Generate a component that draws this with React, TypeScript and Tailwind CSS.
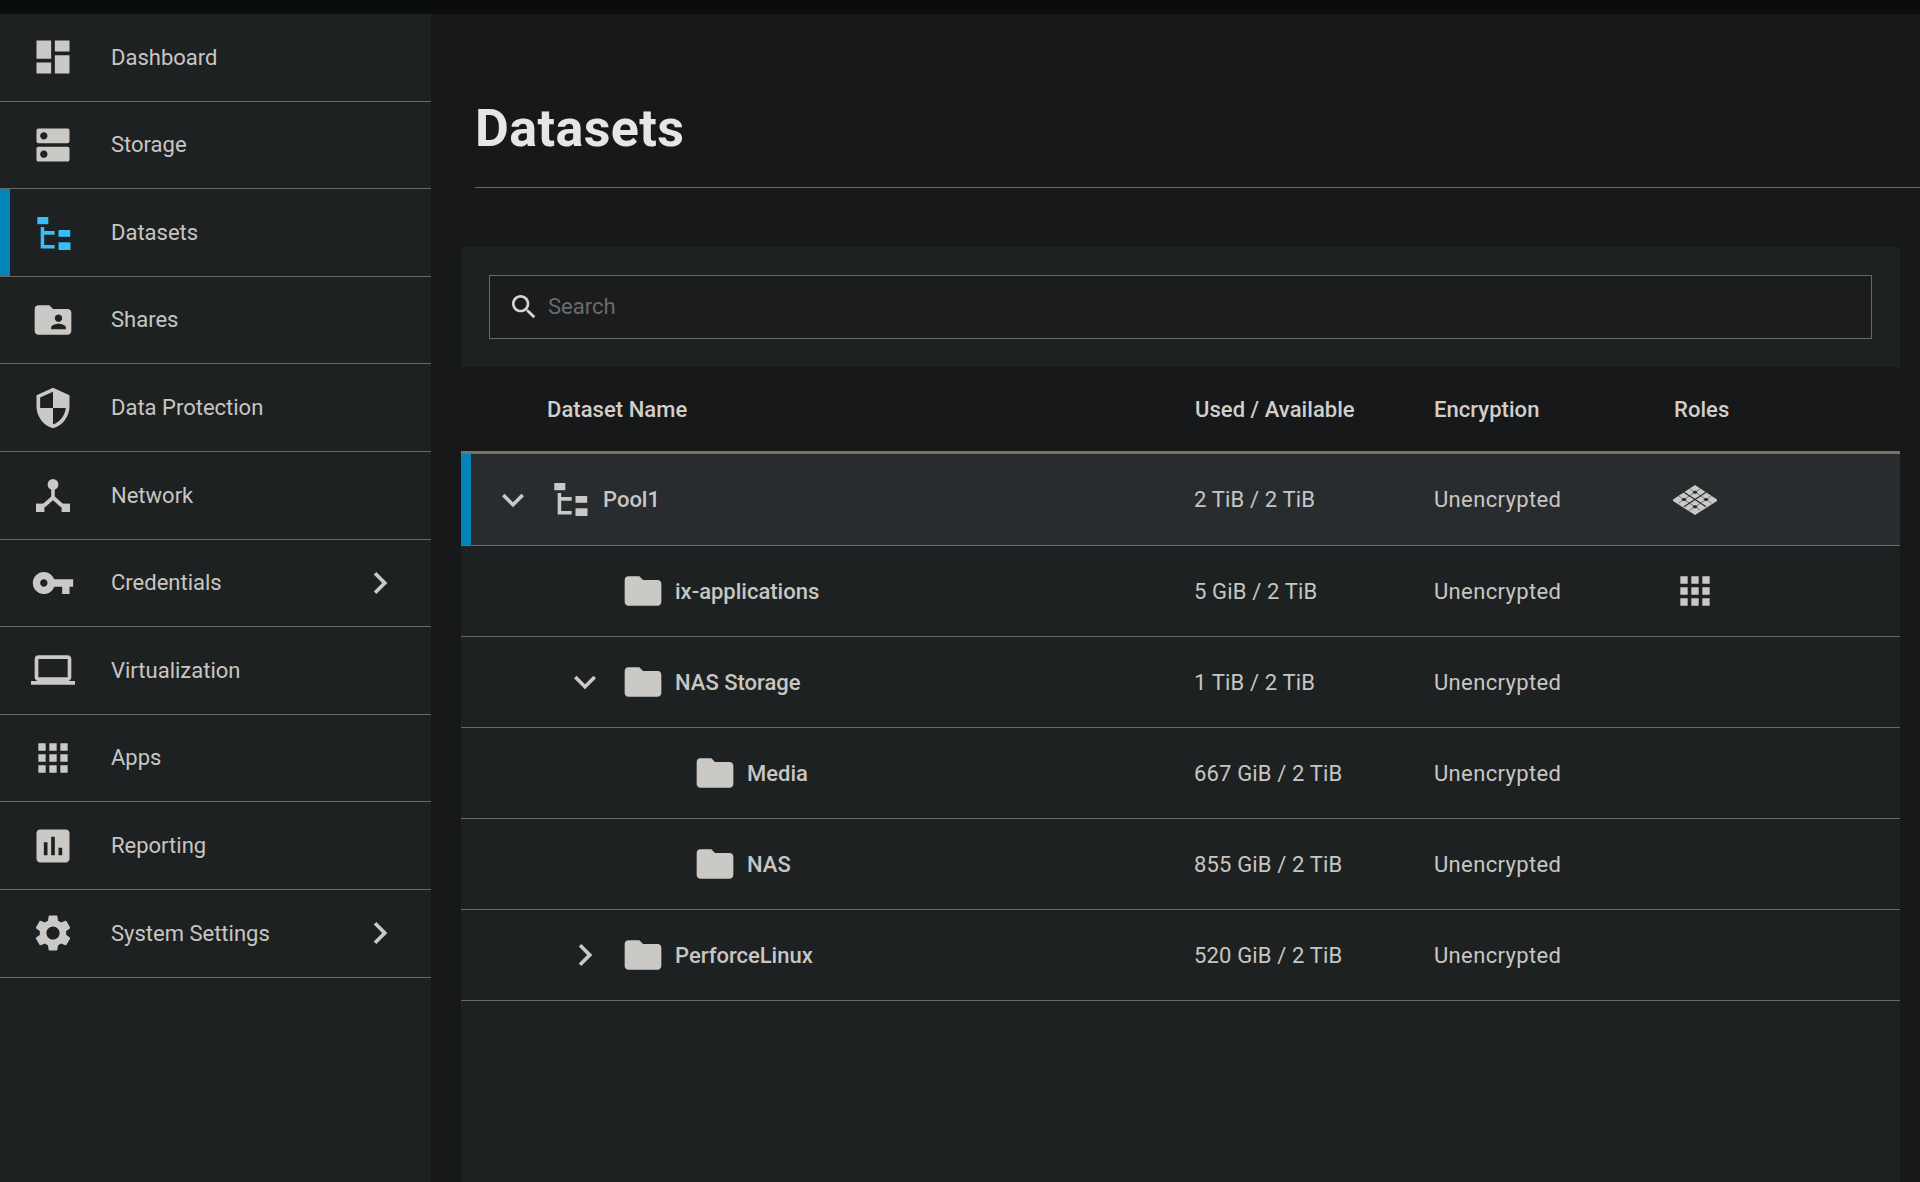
const ICON_COLOR = "#cbc9c5";

const paths: Record<string, string> = {
  dashboard: "M3 13h8V3H3v10zm0 8h8v-6H3v6zm10 0h8V11h-8v10zm0-18v6h8V3h-8z",
  dns: "M20 13H4c-.55 0-1 .45-1 1v6c0 .55.45 1 1 1h16c.55 0 1-.45 1-1v-6c0-.55-.45-1-1-1zM7 19c-1.1 0-2-.9-2-2s.9-2 2-2 2 .9 2 2-.9 2-2 2zM20 3H4c-.55 0-1 .45-1 1v6c0 .55.45 1 1 1h16c.55 0 1-.45 1-1V4c0-.55-.45-1-1-1zM7 9c-1.1 0-2-.9-2-2s.9-2 2-2 2 .9 2 2-.9 2-2 2z",
  shares: "M20 6h-8l-2-2H4c-1.1 0-1.99.9-1.99 2L2 18c0 1.1.9 2 2 2h16c1.1 0 2-.9 2-2V8c0-1.1-.9-2-2-2zm-5 3c1.1 0 2 .9 2 2s-.9 2-2 2-2-.9-2-2 .9-2 2-2zm4 8h-8v-1c0-1.33 2.67-2 4-2s4 .67 4 2v1z",
  security: "M12 1L3 5v6c0 5.55 3.84 10.74 9 12 5.16-1.26 9-6.45 9-12V5l-9-4zm0 10.99h7c-.53 4.12-3.28 7.79-7 8.94V12H5V6.3l7-3.11v8.8z",
  key: "M12.65 10C11.83 7.67 9.61 6 7 6c-3.31 0-6 2.69-6 6s2.69 6 6 6c2.61 0 4.83-1.67 5.65-4H17v4h4v-4h2v-4H12.65zM7 14c-1.1 0-2-.9-2-2s.9-2 2-2 2 .9 2 2-.9 2-2 2z",
  laptop: "M20 18c1.1 0 1.99-.9 1.99-2L22 6c0-1.1-.9-2-2-2H4c-1.1 0-2 .9-2 2v10c0 1.1.9 2 2 2H0v2h24v-2h-4zM4 6h16v10H4V6z",
  apps: "M4 8h4V4H4v4zm6 12h4v-4h-4v4zm-6 0h4v-4H4v4zm0-6h4v-4H4v4zm6 0h4v-4h-4v4zm6-10v4h4V4h-4zm-6 4h4V4h-4v4zm6 6h4v-4h-4v4zm0 6h4v-4h-4v4z",
  reporting: "M19 3H5c-1.1 0-2 .9-2 2v14c0 1.1.9 2 2 2h14c1.1 0 2-.9 2-2V5c0-1.1-.9-2-2-2zM9 17H7v-7h2v7zm4 0h-2V7h2v10zm4 0h-2v-4h2v4z",
  settings: "M19.14 12.94c.04-.3.06-.61.06-.94 0-.32-.02-.64-.07-.94l2.03-1.58c.18-.14.23-.41.12-.61l-1.92-3.32c-.12-.22-.37-.29-.59-.22l-2.39.96c-.5-.38-1.03-.7-1.62-.94l-.36-2.54c-.04-.24-.24-.41-.48-.41h-3.84c-.24 0-.43.17-.47.41l-.36 2.54c-.59.24-1.13.57-1.62.94l-2.39-.96c-.22-.08-.47 0-.59.22L2.74 8.87c-.12.21-.08.47.12.61l2.03 1.58c-.05.3-.09.63-.09.94s.02.64.07.94l-2.03 1.58c-.18.14-.23.41-.12.61l1.92 3.32c.12.22.37.29.59.22l2.39-.96c.5.38 1.03.7 1.62.94l.36 2.54c.05.24.24.41.48.41h3.84c.24 0 .44-.17.47-.41l.36-2.54c.59-.24 1.13-.56 1.62-.94l2.39.96c.22.08.47 0 .59-.22l1.92-3.32c.12-.22.07-.47-.12-.61l-2.01-1.58zM12 15.6c-1.98 0-3.6-1.62-3.6-3.6s1.62-3.6 3.6-3.6 3.6 1.62 3.6 3.6-1.62 3.6-3.6 3.6z",
  folder: "M10 4H4c-1.1 0-1.99.9-1.99 2L2 18c0 1.1.9 2 2 2h16c1.1 0 2-.9 2-2V8c0-1.1-.9-2-2-2h-8l-2-2z",
  expand: "M16.59 8.59L12 13.17 7.41 8.59 6 10l6 6 6-6z",
  right: "M10 6L8.59 7.41 13.17 12l-4.58 4.59L10 18l6-6z",
  search: "M15.5 14h-.79l-.28-.27C15.41 12.59 16 11.11 16 9.5 16 5.91 13.09 3 9.5 3S3 5.91 3 9.5 5.91 16 9.5 16c1.61 0 3.09-.59 4.23-1.57l.27.28v.79l5 4.99L20.49 19l-4.99-5zm-6 0C7.01 14 5 11.99 5 9.5S7.01 5 9.5 5 14 7.01 14 9.5 11.99 14 9.5 14z",
};

function Icon({ name, className = "w-[44px] h-[44px]", color = ICON_COLOR }: { name: string; className?: string; color?: string }) {
  return (
    <svg viewBox="0 0 24 24" className={className} fill={color}>
      <path d={paths[name]} />
    </svg>
  );
}

// dataset tree mark, not in the material set
function DatasetIcon({ color = ICON_COLOR }: { color?: string }) {
  return (
    <svg viewBox="0 0 34 33" className="w-[34px] h-[33px]" fill={color}>
      <rect x="0.3" y="0" width="11" height="7.2" />
      <path d="M3.7 10h3.5v4h10.5v3.8H7.2v10.2h10.5v3.6H3.7z" />
      <rect x="21.5" y="13" width="11.7" height="6.8" />
      <rect x="21.5" y="25.3" width="12" height="7.7" />
    </svg>
  );
}

function NetworkIcon() {
  return (
    <svg viewBox="0 0 34 33" className="w-[34px] h-[33px]" fill={ICON_COLOR}>
      <circle cx="17" cy="5.4" r="5.4" />
      <rect x="0" y="24.6" width="8.4" height="8.4" />
      <rect x="25.6" y="24.6" width="8.4" height="8.4" />
      <path d="M15.2 10h3.6v7.6l9 8-2.6 2.8-8.2-7.2-8.2 7.2-2.6-2.8 9-8z" />
    </svg>
  );
}

// isometric tile mark for the pool role
function RolesIcon() {
  const holes: [number, number][] = [
    [22, 7.25],
    [33, 14.5],
    [22, 21.75],
    [11, 14.5],
  ];
  return (
    <svg viewBox="0 0 44 30" className="w-[44px] h-[30px]">
      <polygon points="22,0 44,14.5 44,16 22,30 0,16 0,14.5" fill={ICON_COLOR} />
      <path d="M11 7.25L33 21.75M33 7.25L11 21.75" stroke="#292c2f" strokeWidth="1.2" />
      <path d="M16.5 3.6L38.5 18.1M5.5 10.9L27.5 25.4M27.5 3.6L5.5 18.1M38.5 10.9L16.5 25.4" stroke="#292c2f" strokeWidth="0.7" opacity="0.75" />
      {holes.map(([x, y]) => (
        <polygon key={`${x}-${y}`} points={`${x},${y - 1.8} ${x + 2.8},${y} ${x},${y + 1.8} ${x - 2.8},${y}`} fill="#292c2f" />
      ))}
    </svg>
  );
}

type NavItem = { label: string; icon: React.ReactNode; arrow?: boolean; active?: boolean };

const navItems: NavItem[] = [
  { label: "Dashboard", icon: <Icon name="dashboard" /> },
  { label: "Storage", icon: <Icon name="dns" /> },
  { label: "Datasets", icon: <div className="mt-[2px] ml-[1px]"><DatasetIcon color="#38bdf8" /></div>, active: true },
  { label: "Shares", icon: <Icon name="shares" /> },
  { label: "Data Protection", icon: <Icon name="security" /> },
  { label: "Network", icon: <NetworkIcon /> },
  { label: "Credentials", icon: <Icon name="key" />, arrow: true },
  { label: "Virtualization", icon: <Icon name="laptop" /> },
  { label: "Apps", icon: <Icon name="apps" /> },
  { label: "Reporting", icon: <Icon name="reporting" /> },
  { label: "System Settings", icon: <Icon name="settings" />, arrow: true },
];

type Row = {
  name: string;
  used: string;
  indent: string;
  toggle?: "down" | "right";
  role?: "pool" | "apps";
  root?: boolean;
};

const rows: Row[] = [
  { name: "Pool1", used: "2 TiB / 2 TiB", indent: "pl-[30px]", toggle: "down", role: "pool", root: true },
  { name: "ix-applications", used: "5 GiB / 2 TiB", indent: "pl-[102px]", role: "apps" },
  { name: "NAS Storage", used: "1 TiB / 2 TiB", indent: "pl-[102px]", toggle: "down" },
  { name: "Media", used: "667 GiB / 2 TiB", indent: "pl-[174px]" },
  { name: "NAS", used: "855 GiB / 2 TiB", indent: "pl-[174px]" },
  { name: "PerforceLinux", used: "520 GiB / 2 TiB", indent: "pl-[102px]", toggle: "right" },
];

function Sidebar() {
  return (
    <aside className="w-[431px] shrink-0 bg-[#1e2122] font-['Roboto',sans-serif]">
      {navItems.map((item) => (
        <div key={item.label} className="relative h-[87.6px] border-b border-[#6f685e] flex items-center text-[#c8c6c2] text-[22px]">
          {item.active && <div className="absolute left-0 top-0 bottom-0 w-[10px] bg-[#0384bb]" />}
          <div className="w-[106px] flex justify-center shrink-0">{item.icon}</div>
          <span className="ml-[5px] pb-[0.4px]">{item.label}</span>
          {item.arrow && (
            <div className="ml-auto mr-[29px]">
              <Icon name="right" />
            </div>
          )}
        </div>
      ))}
    </aside>
  );
}

function DatasetRow({ row }: { row: Row }) {
  return (
    <div className={`flex items-center border-b border-[#6f685e] relative text-[#c8c6c2] text-[22px] ${row.root ? "h-[92px] bg-[#292c2f]" : "h-[91px]"}`}>
      {row.root && <div className="absolute left-0 top-0 bottom-0 w-[10px] bg-[#0384bb]" />}
      <div className="w-[733px] shrink-0 flex items-center">
        <div className={`flex items-center ${row.indent}`}>
          <div className="w-[44px] h-[44px] flex items-center justify-center">
            {row.toggle === "down" && <Icon name="expand" />}
            {row.toggle === "right" && <Icon name="right" />}
          </div>
          <div className="ml-[14px] w-[44px] flex items-center justify-center">
            {row.root ? <DatasetIcon /> : <Icon name="folder" />}
          </div>
          <span className="ml-[10px] font-medium">{row.name}</span>
        </div>
      </div>
      <div className="w-[240px] shrink-0 tracking-[0.15px]">{row.used}</div>
      <div className="w-[240px] shrink-0 tracking-[0.35px]">Unencrypted</div>
      <div className="flex items-center justify-center w-[44px] -ml-px">
        {row.role === "pool" && <RolesIcon />}
        {row.role === "apps" && <Icon name="apps" />}
      </div>
    </div>
  );
}

export default function App() {
  return (
    <div className="w-[1920px] h-[1182px] overflow-hidden bg-[#171819] font-['Roboto',sans-serif]">
      <div className="h-[14px] bg-[#0b0d0d]" />
      <div className="flex h-[1168px]">
        <Sidebar />
        <main className="flex-1 min-w-0">
          <div className="ml-[44px] h-[174px] border-b border-[#6f685e] pt-[80px]">
            <h1 className="text-[52px] leading-[70px] font-bold tracking-[0.4px] text-[#e8e6e2] font-['Roboto',sans-serif]">Datasets</h1>
          </div>
          <div className="ml-[30px] mr-[20px] mt-[59px] bg-[#1e2122] h-[935px]">
            <div className="h-[120px] px-[28px] pt-[28px]">
              <div className="h-[64px] border border-[#6f685e] bg-[#1a1c1e] flex items-center pl-[18px]">
                <Icon name="search" className="w-[32px] h-[32px]" color="#d6d4d0" />
                <span className="ml-[8px] mb-px text-[22px] text-[#6b6b6b]">Search</span>
              </div>
            </div>
            <div className="h-[87px] bg-[#171819] border-b-[3px] border-[#7a7266] flex items-center text-[22px] font-medium tracking-[0.05px] text-[#d0cfcc]">
              <div className="w-[733px] pl-[86px] shrink-0">Dataset Name</div>
              <div className="w-[240px] pl-px shrink-0">Used / Available</div>
              <div className="w-[240px] shrink-0">Encryption</div>
              <div>Roles</div>
            </div>
            {rows.map((row) => (
              <DatasetRow key={row.name} row={row} />
            ))}
          </div>
        </main>
      </div>
    </div>
  );
}
